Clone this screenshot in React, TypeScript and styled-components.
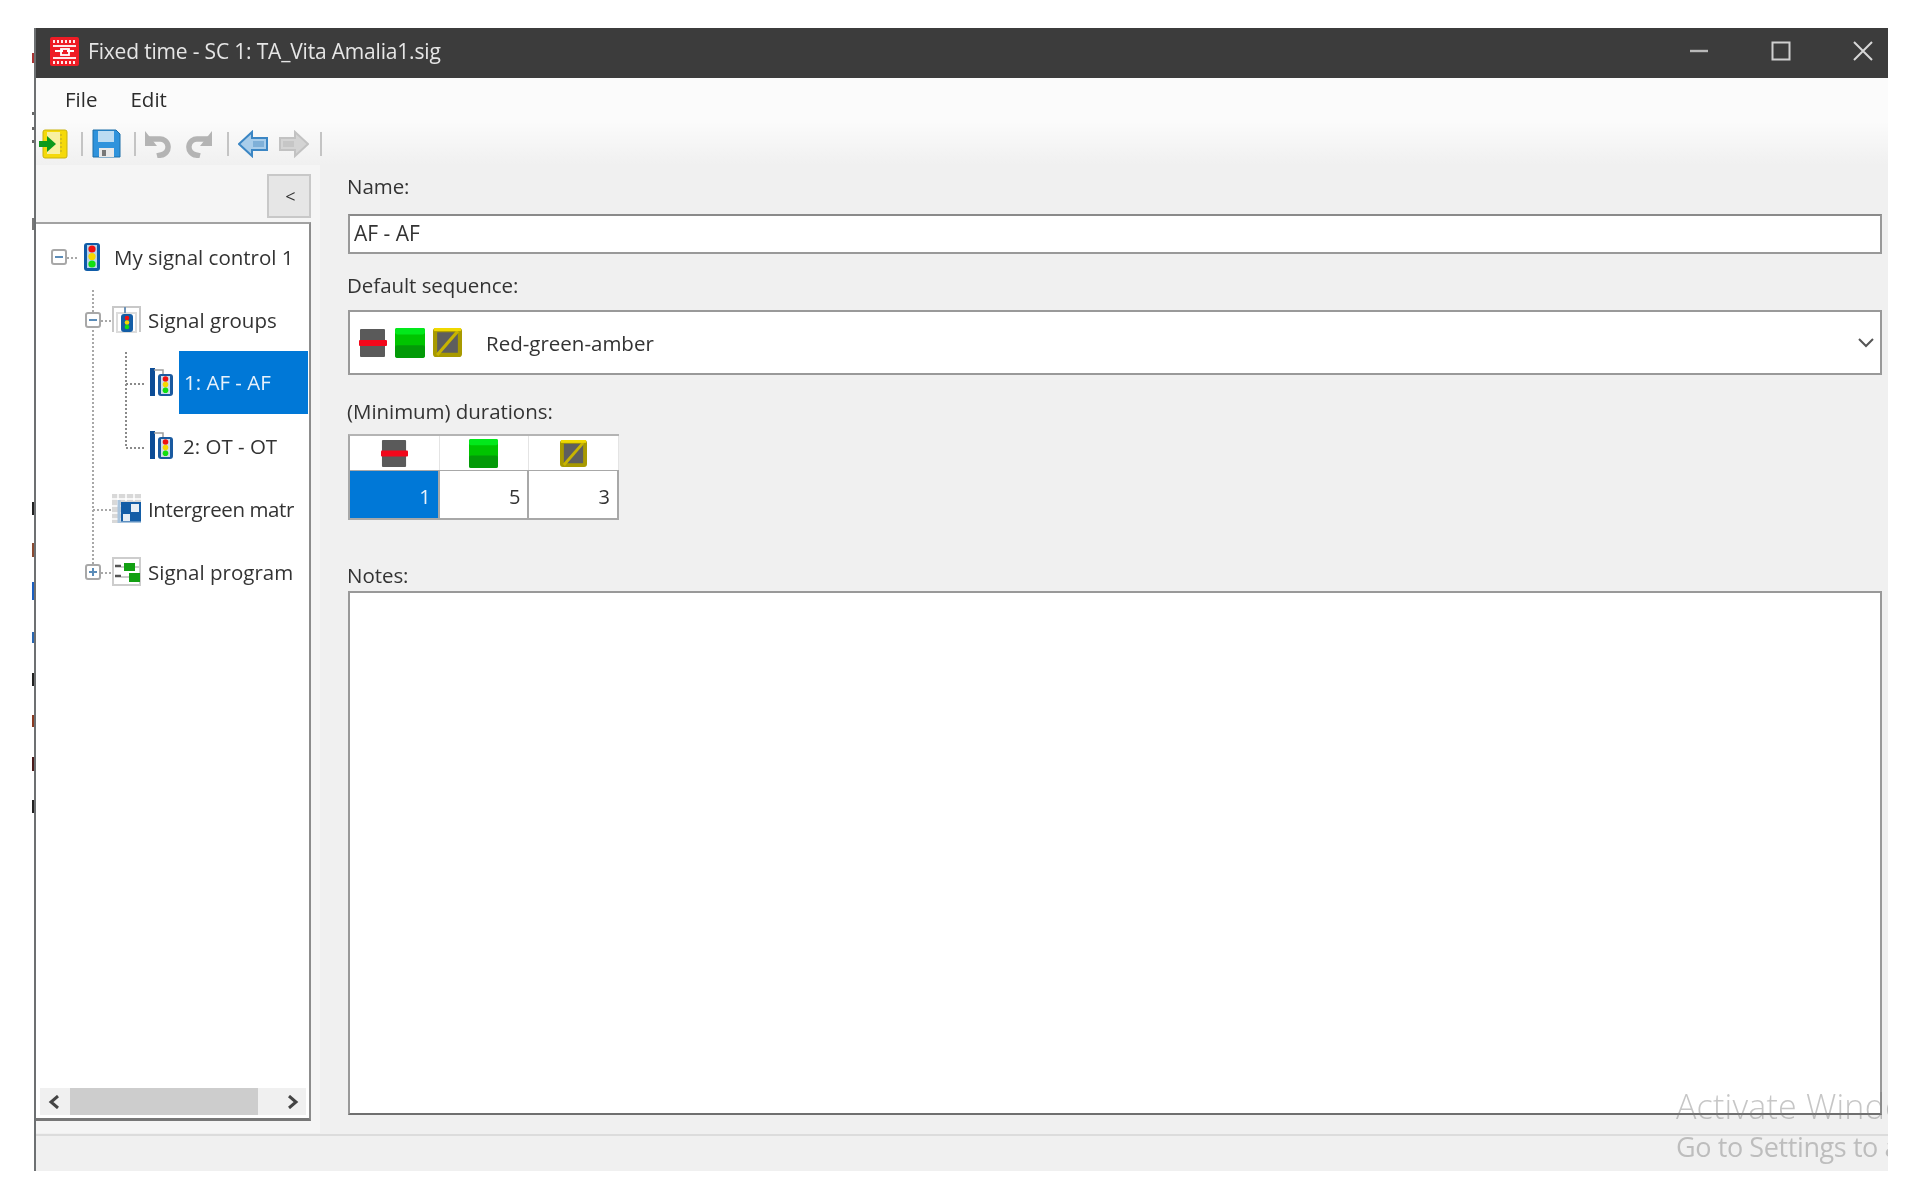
import React from 'react';
import styled, { createGlobalStyle } from 'styled-components';

const GlobalStyle = createGlobalStyle`
  html, body {
    margin: 0;
    padding: 0;
    background: #fff;
  }
  body {
    font-family: 'Open Sans', 'Noto Sans', sans-serif;
    color: #333;
  }
`;

const Page = styled.div`
  position: relative;
  width: 1920px;
  height: 1189px;
  padding: 28px 0 0 34px;
  box-sizing: border-box;
  overflow: hidden;
  filter: blur(0.55px);
`;

const BehindTick = styled.i<{ $top: number; $h: number; $color: string }>`
  position: absolute;
  left: 32px;
  width: 2px;
  top: ${(p) => p.$top}px;
  height: ${(p) => p.$h}px;
  background: ${(p) => p.$color};
`;

const Window = styled.div`
  position: relative;
  width: 1854px;
  height: 1143px;
  box-sizing: border-box;
  border-left: 2px solid #6d7072;
  background: #f0f0f0;
  display: flex;
  flex-direction: column;
  overflow: hidden;
`;

const TitleBar = styled.div`
  height: 50px;
  flex: none;
  background: #3c3c3c;
  display: flex;
  align-items: center;
  padding: 0 0 4px 14px;
  box-sizing: border-box;
  color: #e6e6e6;
  font-size: 21px;
  letter-spacing: -0.18px;
`;

const TitleText = styled.span`
  margin-left: 9px;
  flex: 1;
`;

const WinButton = styled.div`
  width: 82px;
  display: flex;
  justify-content: center;
  align-items: center;
`;

const WinButtons = styled.div`
  display: flex;
  margin-right: -16px;
`;

const Header = styled.div`
  flex: none;
  height: 87px;
  background: linear-gradient(#fbfbfb 0, #fbfbfb 50%, #f0f0f0 100%);
`;

const MenuBar = styled.div`
  height: 42px;
  display: flex;
  align-items: center;
  font-size: 20.5px;
  color: #2c2c2c;
  padding-left: 29px;
  gap: 33px;
`;

const ToolBar = styled.div`
  height: 45px;
  display: flex;
  align-items: center;
  padding: 2px 0 0 2px;
  box-sizing: border-box;
`;

const ToolSep = styled.span<{ $left: number; $right: number }>`
  width: 2px;
  height: 24px;
  background: #c4c4c4;
  margin: 0 ${(p) => p.$right}px 0 ${(p) => p.$left}px;
`;

const ToolGap = styled.span<{ $w: number }>`
  width: ${(p) => p.$w}px;
`;

const Body = styled.div`
  flex: 1;
  display: flex;
  min-height: 0;
`;

const Sidebar = styled.div`
  width: 284px;
  flex: none;
  background: #f5f5f5;
  padding: 9px 9px 12px 0;
  box-sizing: border-box;
  display: flex;
  flex-direction: column;
`;

const CollapseButton = styled.div`
  align-self: flex-end;
  width: 44px;
  height: 44px;
  box-sizing: border-box;
  border: 2px solid #c8c8c8;
  background: #e6e6e6;
  display: flex;
  align-items: center;
  justify-content: center;
  padding-left: 3px;
  font-size: 18px;
  color: #333;
  margin-bottom: 4px;
`;

const TreeBox = styled.div`
  position: relative;
  flex: 1;
  background: #fff;
  border-top: 2px solid #a2a2a2;
  border-right: 2px solid #8d8d8d;
  border-bottom: 3px solid #777;
  box-sizing: border-box;
  padding-top: 1px;
`;

const TreeLines = styled.svg`
  position: absolute;
  left: 0;
  top: 0;
`;

const TreeRow = styled.div<{ $indent: number }>`
  position: relative;
  height: 63px;
  display: flex;
  align-items: center;
  padding-left: ${(p) => p.$indent}px;
`;

const TreeSpacer = styled.span<{ $w: number }>`
  width: ${(p) => p.$w}px;
  flex: none;
`;

const TreeLabel = styled.span<{ $gap: number; $selected?: boolean; $tight?: boolean }>`
  margin-left: ${(p) => p.$gap}px;
  font-size: 20.5px;
  letter-spacing: ${(p) => (p.$tight ? '-0.4px' : '0')};
  white-space: nowrap;
  color: #333;
  ${(p) =>
    p.$selected &&
    `
    background: #0078d7;
    color: #e8f2fb;
    width: 129px;
    height: 63px;
    line-height: 63px;
    padding-left: 5px;
    box-sizing: border-box;
  `}
`;

const Scrollbar = styled.div`
  position: absolute;
  left: 4px;
  right: 3px;
  bottom: 3px;
  height: 27px;
  background: #f0f0f0;
  display: flex;
  align-items: center;
`;

const ScrollArrow = styled.div<{ $shift: number }>`
  width: 30px;
  flex: none;
  display: flex;
  justify-content: center;
  padding-left: ${(p) => Math.max(p.$shift, 0)}px;
  padding-right: ${(p) => Math.max(-p.$shift, 0)}px;
  box-sizing: border-box;
`;

const ScrollThumb = styled.div`
  width: 188px;
  height: 27px;
  background: #cdcdcd;
`;

const ScrollRest = styled.div`
  flex: 1;
`;

const Content = styled.div`
  flex: 1;
  padding: 7px 6px 0 28px;
  display: flex;
  flex-direction: column;
  min-width: 0;
`;

const FieldLabel = styled.div<{ $top?: number; $bottom: number }>`
  height: 28px;
  line-height: 28px;
  font-size: 20.5px;
  letter-spacing: -0.05px;
  color: #333;
  margin-left: -1px;
  margin-top: ${(p) => p.$top ?? 0}px;
  margin-bottom: ${(p) => p.$bottom}px;
`;

const TextInput = styled.div`
  height: 40px;
  box-sizing: border-box;
  background: #fff;
  border: 2px solid #999;
  border-top-color: #8a8a8a;
  padding-left: 4px;
  line-height: 34px;
  font-size: 21px;
  color: #333;
`;

const SelectBox = styled.div`
  height: 65px;
  box-sizing: border-box;
  background: #fff;
  border: 2px solid #999;
  display: flex;
  align-items: center;
  padding: 0 6px 0 9px;
  gap: 8px;
`;

const SelectText = styled.span`
  flex: 1;
  margin-left: 16px;
  font-size: 20.5px;
  color: #333;
`;

const Durations = styled.div`
  width: 271px;
  display: grid;
  grid-template-columns: repeat(3, 1fr);
  grid-template-rows: 34px 50px;
  border-top: 2px solid #b4b4b4;
  border-left: 2px solid #a8a8a8;
  box-sizing: border-box;
  height: 86px;
`;

const HeadCell = styled.div`
  background: #fff;
  border-right: 1px solid #e4e4e4;
  display: flex;
  align-items: center;
  justify-content: center;
`;

const ValueCell = styled.div<{ $active?: boolean }>`
  background: ${(p) => (p.$active ? '#0078d7' : '#fff')};
  color: ${(p) => (p.$active ? '#e8f2fb' : '#333')};
  border-right: 2px solid #a8a8a8;
  border-top: 1px solid #a8a8a8;
  border-bottom: 2px solid #a8a8a8;
  box-sizing: border-box;
  text-align: right;
  padding-right: 7px;
  line-height: 52px;
  font-size: 20px;
`;

const NotesBox = styled.div`
  height: 524px;
  box-sizing: border-box;
  background: #fff;
  border: 2px solid #999;
  border-bottom-color: #6f6f6f;
`;

const StatusBar = styled.div`
  flex: none;
  height: 37px;
  border-top: 2px solid #dcdcdc;
  box-sizing: border-box;
  margin-top: 1px;
`;

const Watermark = styled.div`
  position: absolute;
  left: 1640px;
  top: 1056px;
  white-space: nowrap;
  color: rgba(120, 120, 120, 0.42);
  font-weight: 300;
`;

const WatermarkTitle = styled.div`
  font-size: 34px;
  line-height: 44px;
  letter-spacing: 0.2px;
`;

const WatermarkHint = styled.div`
  font-size: 27px;
  line-height: 38px;
  letter-spacing: -0.4px;
  font-weight: 400;
`;

const AppLogo = () => (
  <svg width="29" height="29" viewBox="0 0 29 29">
    <rect width="29" height="29" rx="2" fill="#ee1c25" />
    <g stroke="#fff" fill="none" strokeWidth="1.8">
      <path d="M4 3v3M8 3v3M12 3v3M16 3v3M20 3v3M24 3v3" />
      <path d="M3 9h23" />
      <path d="M5 14h8M17 14h7" />
      <rect x="11" y="12" width="8" height="6" />
      <path d="M3 21h23" />
      <path d="M4 24v3M8 24v3M12 24v3M16 24v3M20 24v3M24 24v3" />
    </g>
  </svg>
);

const Minimize = () => (
  <svg width="20" height="20" viewBox="0 0 20 20">
    <path d="M1 10h18" stroke="#b9b9b9" strokeWidth="2.4" />
  </svg>
);

const Maximize = () => (
  <svg width="20" height="20" viewBox="0 0 20 20">
    <rect x="1.5" y="1.5" width="17" height="17" fill="none" stroke="#cfcfcf" strokeWidth="2" />
  </svg>
);

const CloseIcon = () => (
  <svg width="20" height="20" viewBox="0 0 20 20">
    <path d="M1 1l18 18M19 1L1 19" stroke="#d8d8d8" strokeWidth="2" />
  </svg>
);

const OpenIcon = () => (
  <svg width="30" height="30" viewBox="0 0 30 30">
    <rect x="5" y="1" width="24" height="28" rx="2" fill="#f5d90a" stroke="#c9b30c" />
    <rect x="9" y="3" width="13" height="22" fill="#f8f0a0" />
    <path d="M23 5v18" stroke="#b5a52a" strokeDasharray="2 2" />
    <path d="M1 12h8V7l9 8-9 8v-5H1z" fill="#0c9a1c" />
  </svg>
);

const SaveIcon = () => (
  <svg width="29" height="29" viewBox="0 0 29 29">
    <path d="M1 1h23l4 4v23H1z" fill="#2f93dc" stroke="#1c6ea8" />
    <rect x="6" y="2" width="16" height="11" fill="#bcdcf2" />
    <rect x="7" y="19" width="15" height="9" fill="#e8e8e8" />
    <rect x="10" y="21" width="4" height="6" fill="#777" />
  </svg>
);

const UndoIcon = ({ flip }: { flip?: boolean }) => (
  <svg width="29" height="28" viewBox="0 0 29 28" transform={flip ? 'scale(-1 1)' : undefined}>
    <path d="M6 9h10a8 8 0 0 1 2 16l-4 1" fill="none" stroke="#b4b4b4" strokeWidth="5.5" />
    <path d="M2 1v15h12z" fill="#b4b4b4" />
  </svg>
);

const ArrowIcon = ({ flip, fill, stroke, inner }: { flip?: boolean; fill: string; stroke: string; inner: string }) => (
  <svg width="30" height="28" viewBox="0 0 30 28" transform={flip ? 'scale(-1 1)' : undefined}>
    <path d="M1 14L14 2v6h15v12H14v6z" fill={fill} stroke={stroke} strokeWidth="2" />
    <rect x="15" y="11" width="11" height="6" fill={inner} />
  </svg>
);

const Expander = ({ plus }: { plus?: boolean }) => (
  <svg width="16" height="16" viewBox="0 0 16 16">
    <rect x="1" y="1" width="14" height="14" rx="2" fill="#fff" stroke="#a8a8a8" strokeWidth="2" />
    <path d={plus ? 'M4 8h8M8 4v8' : 'M4 8h8'} stroke="#5b8cb8" strokeWidth="2" />
  </svg>
);

const Lamps = ({ x, y, r, step }: { x: number; y: number; r: number; step: number }) => (
  <>
    <circle cx={x} cy={y} r={r} fill="#f01010" />
    <circle cx={x} cy={y + step} r={r} fill="#f6d800" />
    <circle cx={x} cy={y + step * 2} r={r} fill="#10e010" />
  </>
);

const ControllerIcon = () => (
  <svg width="18" height="30" viewBox="0 0 18 30">
    <rect x="1" y="1" width="16" height="28" rx="3" fill="#0f5ca8" />
    <rect x="4" y="3" width="10" height="23" fill="#b9d4ea" />
    <Lamps x={9} y={7} r={3.6} step={7.5} />
  </svg>
);

const GroupsIcon = () => (
  <svg width="29" height="29" viewBox="0 0 29 29">
    <path d="M1 27V2h27v25" fill="none" stroke="#c8c8c8" strokeWidth="2" />
    <path d="M5 27V8h19v19z" fill="none" stroke="#dcdcdc" strokeWidth="2" />
    <path d="M13 2v6" stroke="#6d93b8" strokeWidth="2" />
    <rect x="9" y="9" width="12" height="18" rx="3" fill="#135da6" />
    <Lamps x={15} y={13} r={2.3} step={4.5} />
  </svg>
);

const GroupIcon = () => (
  <svg width="25" height="29" viewBox="0 0 25 29">
    <path d="M1 0h5v28H1z" fill="#0c4c96" />
    <path d="M5 2h9v6" fill="none" stroke="#9d9d9d" strokeWidth="1.5" />
    <rect x="9" y="6" width="15" height="22" rx="3" fill="#1a5aa0" />
    <rect x="12" y="8" width="9" height="18" fill="#cfdcea" />
    <Lamps x={16.5} y={11} r={2.8} step={5.6} />
  </svg>
);

const MatrixIcon = () => (
  <svg width="29" height="29" viewBox="0 0 29 29">
    <rect x="0" y="0" width="29" height="29" fill="#d8d8d8" />
    <path d="M0 5h29M0 12h9M0 19h9M0 25h9M6 0v12M14 0v7M22 0v7" stroke="#fff" strokeWidth="1.5" />
    <rect x="9" y="8" width="20" height="21" fill="#135da6" />
    <rect x="19" y="10" width="8" height="8" fill="#e6eef5" />
    <rect x="11" y="20" width="7" height="7" fill="#e6eef5" />
    <path d="M7 6v23h22" fill="none" stroke="#a9c4dd" strokeWidth="3" />
  </svg>
);

const ProgramIcon = () => (
  <svg width="29" height="29" viewBox="0 0 29 29">
    <rect x="1" y="1" width="27" height="27" fill="#fff" stroke="#cdcdcd" strokeWidth="2" />
    <path d="M3 9h6M3 19h6" stroke="#555" strokeWidth="2.5" />
    <path d="M9 10h18M9 20h18" stroke="#bbb" strokeWidth="1.5" />
    <rect x="12" y="6" width="11" height="8" fill="#12a012" />
    <rect x="17" y="16" width="11" height="9" fill="#12a012" />
  </svg>
);

const RedBar = ({ size }: { size: number }) => (
  <svg width={size} height={size} viewBox="0 0 28 28">
    <rect x="1" y="0" width="25" height="28" rx="1" fill="#5a5a5a" />
    <rect x="0" y="11" width="28" height="6" rx="1" fill="#f2071b" />
  </svg>
);

const GreenBar = ({ size }: { size: number }) => (
  <svg width={size} height={size} viewBox="0 0 28 28">
    <rect x="0" y="0" width="28" height="28" rx="2" fill="#00c400" />
    <rect x="0" y="0" width="28" height="6" rx="2" fill="#02e81b" />
    <rect x="0" y="16" width="28" height="12" rx="2" fill="#039a08" />
  </svg>
);

const AmberBar = ({ size }: { size: number }) => (
  <svg width={size} height={size} viewBox="0 0 28 28">
    <rect x="2" y="2" width="24" height="24" rx="1" fill="#5e5e5e" stroke="#a89a00" strokeWidth="4" />
    <path d="M4 26L24 3" stroke="#c8b400" strokeWidth="3" />
    <path d="M1 1.5h26" stroke="#efd800" strokeWidth="3" />
  </svg>
);

const Chevron = () => (
  <svg width="16" height="10" viewBox="0 0 16 10">
    <path d="M1 1l7 7 7-7" fill="none" stroke="#555" strokeWidth="2" />
  </svg>
);

const ScrollChevron = ({ right }: { right?: boolean }) => (
  <svg width="12" height="14" viewBox="0 0 12 14">
    <path d={right ? 'M2 1l7 6-7 6' : 'M10 1L3 7l7 6'} fill="none" stroke="#444" strokeWidth="3" />
  </svg>
);

const ticks = [
  { top: 53, h: 10, color: '#a33' },
  { top: 112, h: 3, color: '#666' },
  { top: 127, h: 3, color: '#666' },
  { top: 140, h: 3, color: '#666' },
  { top: 218, h: 12, color: '#777' },
  { top: 502, h: 13, color: '#222' },
  { top: 543, h: 14, color: '#8a4a30' },
  { top: 582, h: 18, color: '#1a5ec0' },
  { top: 632, h: 11, color: '#2a66b0' },
  { top: 673, h: 13, color: '#222' },
  { top: 715, h: 12, color: '#8a3a20' },
  { top: 757, h: 14, color: '#4a1a1a' },
  { top: 800, h: 13, color: '#222' },
];

const App: React.FunctionComponent = () => (
  <Page>
    <GlobalStyle />
    {ticks.map((t) => (
      <BehindTick key={t.top} $top={t.top} $h={t.h} $color={t.color} />
    ))}
    <Window>
      <TitleBar>
        <AppLogo />
        <TitleText>Fixed time - SC 1: TA_Vita Amalia1.sig</TitleText>
        <WinButtons>
          <WinButton>
            <Minimize />
          </WinButton>
          <WinButton>
            <Maximize />
          </WinButton>
          <WinButton>
            <CloseIcon />
          </WinButton>
        </WinButtons>
      </TitleBar>
      <Header>
        <MenuBar>
          <span>File</span>
          <span>Edit</span>
        </MenuBar>
        <ToolBar>
          <OpenIcon />
          <ToolSep $left={13} $right={9} />
          <SaveIcon />
          <ToolSep $left={13} $right={7} />
          <UndoIcon />
          <ToolGap $w={13} />
          <UndoIcon flip />
          <ToolSep $left={13} $right={9} />
          <ArrowIcon fill="#a9cdea" stroke="#3b86c4" inner="#7fb0d8" />
          <ToolGap $w={11} />
          <ArrowIcon flip fill="#d4d4d4" stroke="#c2c2c2" inner="#c6c6c6" />
          <ToolSep $left={11} $right={0} />
        </ToolBar>
      </Header>
      <Body>
        <Sidebar>
          <CollapseButton>&lt;</CollapseButton>
          <TreeBox>
            <TreeLines width="275" height="420" viewBox="0 0 275 420">
              <g fill="none" stroke="#a8a8a8" strokeWidth="2" strokeDasharray="2 2">
                <path d="M31 34h12" />
                <path d="M57 66v274" />
                <path d="M65 97h10" />
                <path d="M57 286h18" />
                <path d="M65 349h10" />
                <path d="M90 128v96h20" stroke="#8a8a8a" />
                <path d="M90 160h20" stroke="#8a8a8a" />
              </g>
            </TreeLines>
            <TreeRow $indent={15}>
              <Expander />
              <TreeSpacer $w={16} />
              <ControllerIcon />
              <TreeLabel $gap={13}>My signal control 1</TreeLabel>
            </TreeRow>
            <TreeRow $indent={49}>
              <Expander />
              <TreeSpacer $w={11} />
              <GroupsIcon />
              <TreeLabel $gap={7}>Signal groups</TreeLabel>
            </TreeRow>
            <TreeRow $indent={113}>
              <GroupIcon />
              <TreeLabel $gap={5} $selected>
                1: AF - AF
              </TreeLabel>
            </TreeRow>
            <TreeRow $indent={113}>
              <GroupIcon />
              <TreeLabel $gap={9}>2: OT - OT</TreeLabel>
            </TreeRow>
            <TreeRow $indent={76}>
              <MatrixIcon />
              <TreeLabel $gap={7} $tight>
                Intergreen matr
              </TreeLabel>
            </TreeRow>
            <TreeRow $indent={49}>
              <Expander plus />
              <TreeSpacer $w={11} />
              <ProgramIcon />
              <TreeLabel $gap={7}>Signal program</TreeLabel>
            </TreeRow>
            <Scrollbar>
              <ScrollArrow $shift={-2}>
                <ScrollChevron />
              </ScrollArrow>
              <ScrollThumb />
              <ScrollRest />
              <ScrollArrow $shift={4}>
                <ScrollChevron right />
              </ScrollArrow>
            </Scrollbar>
          </TreeBox>
        </Sidebar>
        <Content>
          <FieldLabel $bottom={14}>Name:</FieldLabel>
          <TextInput>AF - AF</TextInput>
          <FieldLabel $top={17} $bottom={11}>
            Default sequence:
          </FieldLabel>
          <SelectBox>
            <RedBar size={28} />
            <GreenBar size={30} />
            <AmberBar size={29} />
            <SelectText>Red-green-amber</SelectText>
            <Chevron />
          </SelectBox>
          <FieldLabel $top={22} $bottom={9}>
            (Minimum) durations:
          </FieldLabel>
          <Durations>
            <HeadCell>
              <RedBar size={27} />
            </HeadCell>
            <HeadCell>
              <GreenBar size={29} />
            </HeadCell>
            <HeadCell>
              <AmberBar size={27} />
            </HeadCell>
            <ValueCell $active>1</ValueCell>
            <ValueCell>5</ValueCell>
            <ValueCell>3</ValueCell>
          </Durations>
          <FieldLabel $top={41} $bottom={2}>
            Notes:
          </FieldLabel>
          <NotesBox />
        </Content>
      </Body>
      <StatusBar />
      <Watermark>
        <WatermarkTitle>Activate Windows</WatermarkTitle>
        <WatermarkHint>Go to Settings to activate Windows.</WatermarkHint>
      </Watermark>
    </Window>
  </Page>
);

export default App;
